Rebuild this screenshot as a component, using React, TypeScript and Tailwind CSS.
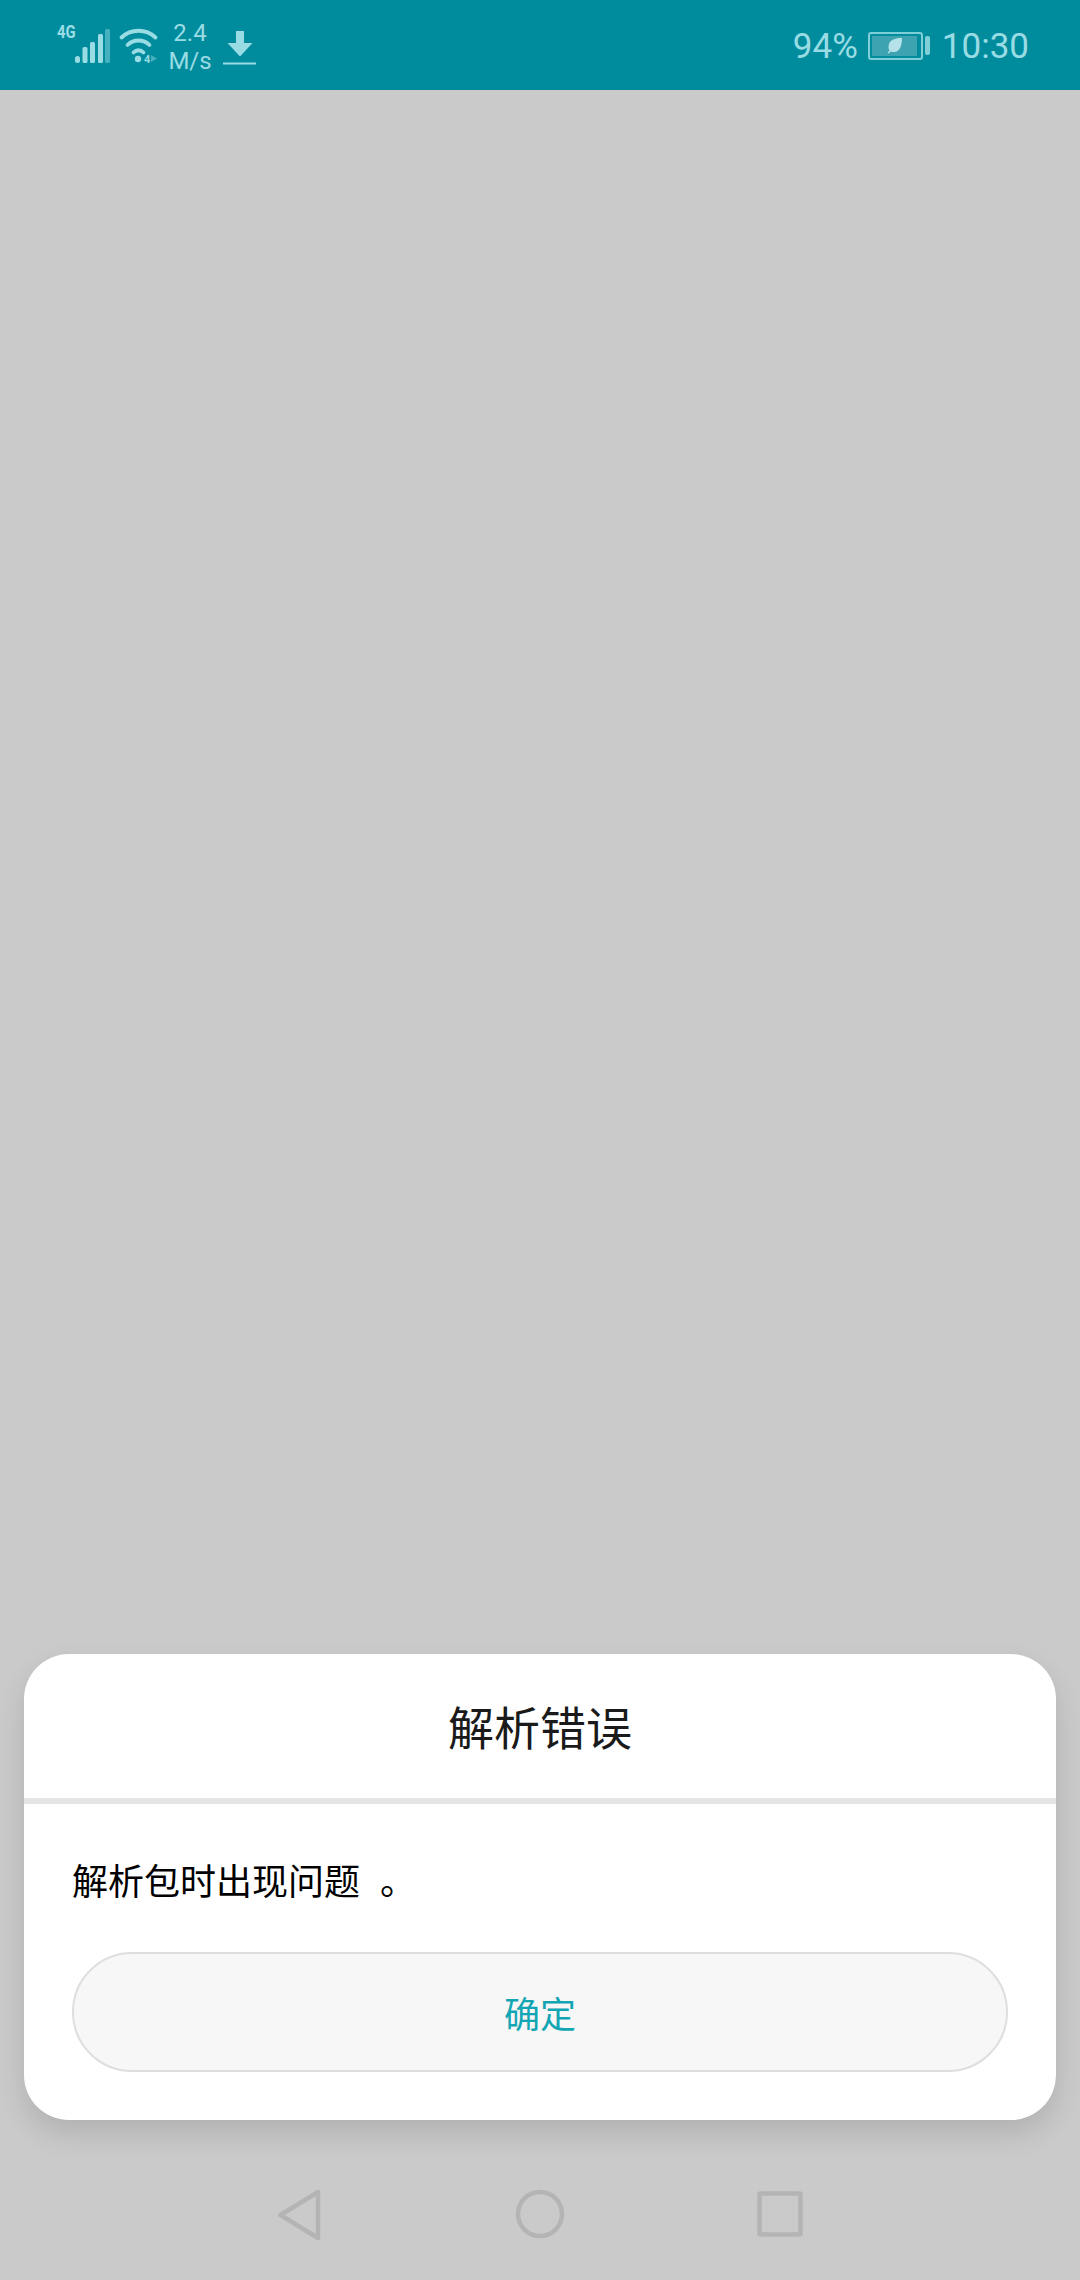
import React from 'react';

const SignalIcon = () => (
  <svg width="37" height="35" viewBox="0 0 37 35" fill="#9adce4">
    <rect x="0" y="27" width="5" height="7" rx="2.5" />
    <rect x="7.5" y="18" width="5" height="16" rx="1.5" />
    <rect x="15" y="13" width="5" height="21" rx="1.5" />
    <rect x="23" y="5" width="5" height="29" rx="1.5" />
    <rect x="30" y="0" width="5" height="34" rx="1.5" opacity="0.45" />
  </svg>
);

const WifiIcon = () => (
  <svg className="overflow-visible" width="40" height="36" viewBox="0 0 40 36" fill="none" stroke="#9adce4" strokeWidth="3.8" strokeLinecap="round">
    <path d="M2.5 9.5C12 0.5 27 0.5 36.5 9.5" />
    <path d="M8.5 17C14.5 11 24.5 11 30.5 17" />
    <path d="M14.5 24.5C17.5 21.5 21.5 21.5 24.5 24.5" />
    <circle cx="19" cy="31" r="3.2" fill="#9adce4" stroke="none" />
    <text x="25" y="35" fontSize="11" fontWeight="700" fill="#9adce4" stroke="none" fontFamily="Roboto, sans-serif">4</text>
    <path d="M32 27L38 30.5L32 34Z" fill="#9adce4" stroke="none" opacity="0.45" />
  </svg>
);

const DownloadIcon = () => (
  <svg width="34" height="36" viewBox="0 0 34 36" fill="#9adce4">
    <path d="M13 1H21V13H29.5L17 26.5L4.5 13H13Z" />
    <rect x="0" y="32.5" width="33" height="2" />
  </svg>
);

const BatteryIcon = () => (
  <div className="flex items-center gap-[2px]">
    <div className="flex h-[28px] w-[55px] items-center rounded-[3px] border-2 border-[#7fcfd9] p-[2px]">
      <div className="flex h-full w-[45px] items-center justify-center bg-[#3ea3b1]">
        <svg width="17" height="17" viewBox="0 0 17 17" fill="#b5e2e8">
          <path d="M16 1C8 1 2.5 3.5 2.5 10C2.5 11.5 3 12.5 3.5 13.5L1.5 16L2.5 16.5L5 14.5C6 15 7 15 8 15C14 15 16 8 16 1Z" />
        </svg>
      </div>
    </div>
    <div className="h-[19px] w-[5px] rounded-[2px] bg-[#7fcfd9]" />
  </div>
);

const StatusBar = () => (
  <div className="flex h-[90px] shrink-0 items-center justify-between bg-[#018c9e] pl-[57px] pr-[51px] text-[#9adce4] font-['Roboto',sans-serif]">
    <div className="flex items-center">
      <span className="mb-[26px] mr-[-6px] w-[24px] origin-left scale-x-[0.78] whitespace-nowrap text-[19px] leading-[18px] font-bold">4G</span>
      <div className="mt-[2px] flex items-center">
        <SignalIcon />
      </div>
      <div className="ml-[7px] mt-[2px]">
        <WifiIcon />
      </div>
      <div className="ml-[9px] mt-[3px] w-[44px] text-center text-[24px] leading-[28px]">
        <div>2.4</div>
        <div>M/s</div>
      </div>
      <div className="ml-[11px] mt-[6px]">
        <DownloadIcon />
      </div>
    </div>
    <div className="flex items-center">
      <span className="mt-[4px] text-[35px] leading-[40px]">94%</span>
      <div className="ml-[10px] mt-[1px]">
        <BatteryIcon />
      </div>
      <span className="ml-[12px] mt-[4px] text-[35px] leading-[40px]">10:30</span>
    </div>
  </div>
);

const NavBar = () => (
  <div className="flex h-[160px] shrink-0 items-start pl-[277px] pt-[69px]">
    <svg width="44" height="52" viewBox="0 0 44 52" fill="none" stroke="#b4b4b4" strokeWidth="4.5" strokeLinejoin="round">
      <path d="M3.5 26L41 3V49Z" />
    </svg>
    <svg className="ml-[194px]" width="50" height="50" viewBox="0 0 50 50" fill="none" stroke="#b4b4b4" strokeWidth="4.5">
      <circle cx="25" cy="25" r="22" />
    </svg>
    <svg className="ml-[192px] mt-[2px]" width="46" height="46" viewBox="0 0 46 46" fill="none" stroke="#b4b4b4" strokeWidth="4.5" strokeLinejoin="round">
      <rect x="2.5" y="2.5" width="41" height="41" rx="1" />
    </svg>
  </div>
);

export default function App() {
  return (
    <div className="flex h-[2280px] w-[1080px] flex-col overflow-hidden bg-[#cacaca] font-['Noto_Sans_CJK_SC','Noto_Sans',sans-serif]">
      <StatusBar />
      <div className="flex-1" />
      <div className="mx-6 flex h-[466px] shrink-0 flex-col rounded-[45px] bg-white shadow-[0_14px_28px_rgba(0,0,0,0.12)]">
        <div className="flex h-[144px] items-center justify-center pb-[2px] text-[46px] text-[#1a1a1a]">解析错误</div>
        <div className="h-[6px] bg-[#e5e5e5]" />
        <div className="px-[48px] pt-[49px]">
          <p className="h-[99px] text-[36px] leading-[52px] text-black">
            解析包时出现问题<span className="ml-[20px]">。</span>
          </p>
          <button className="flex h-[120px] w-full items-center justify-center rounded-full border-2 border-[#dedede] bg-[#f7f7f7] text-[36px] text-[#12a5b4]">
            确定
          </button>
        </div>
      </div>
      <NavBar />
    </div>
  );
}
